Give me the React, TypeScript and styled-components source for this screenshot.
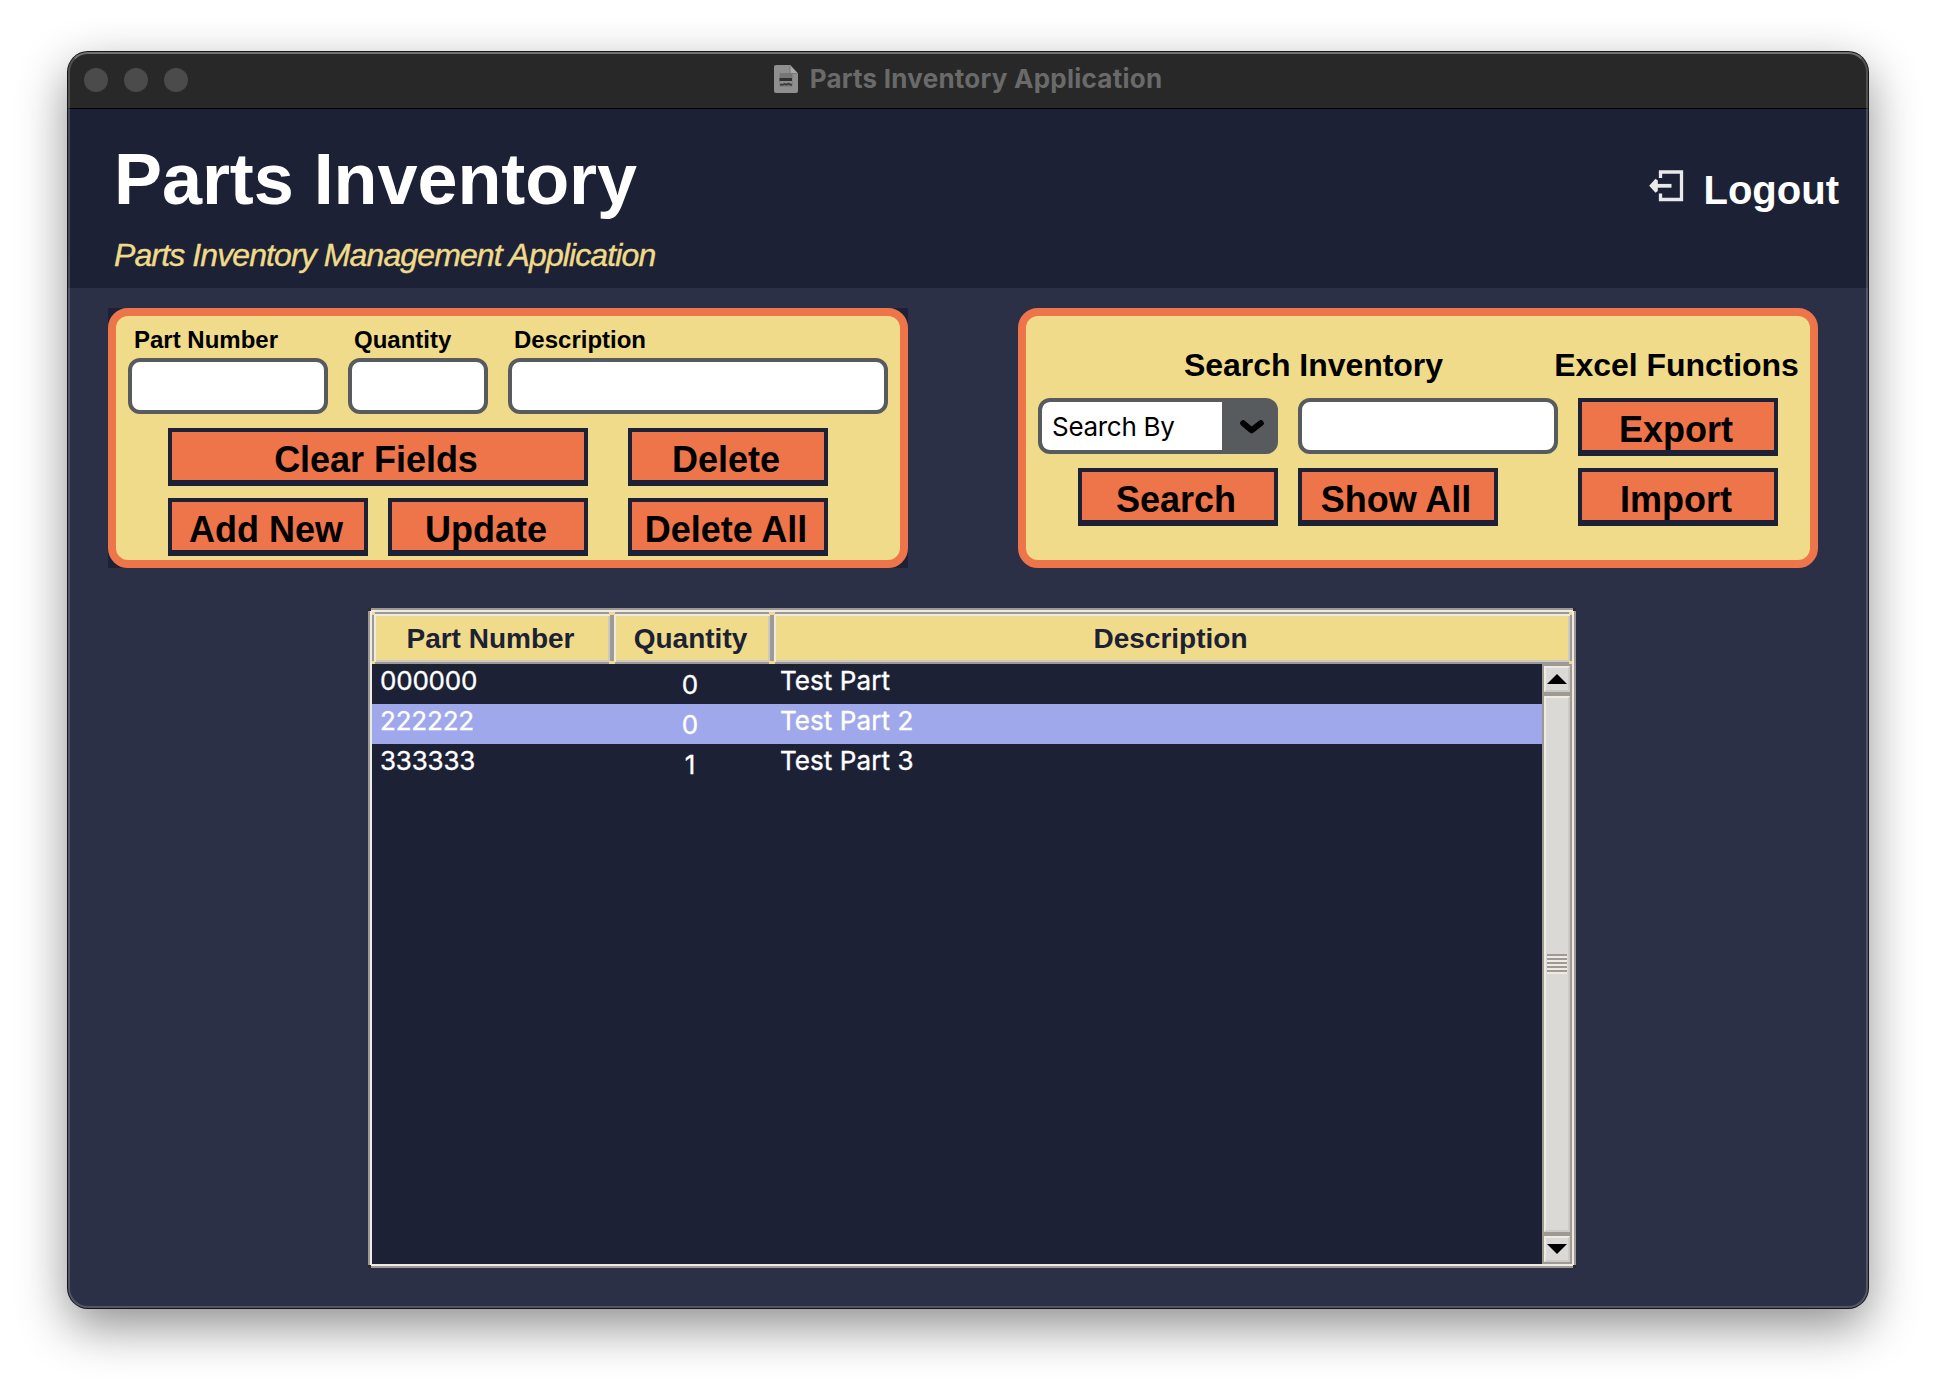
import React from "react";
import styled, { createGlobalStyle, css } from "styled-components";

const navy = "#1c2135";
const slate = "#2b3046";
const khaki = "#efdb89";
const orange = "#ee744a";
const steel = "#575b5e";
const bevelDark = "#9e9a91";
const bevelMid = "#cbcac6";
const bevelLight = "#eeebe7";
const arial = `"Liberation Sans", Arial, sans-serif`;
const system = `Inter, "Liberation Sans", sans-serif`;

const GlobalStyle = createGlobalStyle`
  *, *::before, *::after { box-sizing: border-box; }
  body { margin: 0; background: #fff; overflow: hidden; }
`;

const Desktop = styled.div`
  width: 1936px;
  height: 1392px;
  padding: 52px 68px 84px;
`;

const Window = styled.main`
  position: relative;
  display: flex;
  flex-direction: column;
  height: 1256px;
  border-radius: 20px;
  background: ${slate};
  box-shadow: 0 0 0 1px #151515, 0 18px 50px rgba(0, 0, 0, 0.45);
  &::after {
    content: "";
    position: absolute;
    inset: 0;
    border: 2px solid rgba(255, 255, 255, 0.19);
    border-top-color: rgba(255, 255, 255, 0.34);
    border-radius: inherit;
    pointer-events: none;
  }
`;

const TitleBar = styled.div`
  display: grid;
  grid-template-columns: 1fr auto 1fr;
  align-items: center;
  height: 57px;
  flex: none;
  padding: 0 16px;
  border-bottom: 1px solid #000;
  border-radius: 20px 20px 0 0;
  background: #282828;
`;

const Lights = styled.div`
  display: flex;
  gap: 16px;
`;

const Light = styled.i`
  width: 24px;
  height: 24px;
  border-radius: 50%;
  background: #4b4b4b;
`;

const WindowTitle = styled.div`
  display: flex;
  align-items: center;
  gap: 12px;
  padding-bottom: 3px;
  font: 700 26px/40px ${system};
  letter-spacing: 0.24px;
  color: #6a6a6a;
`;

const Header = styled.header`
  display: flex;
  justify-content: space-between;
  height: 179px;
  flex: none;
  padding: 30px 29px 0 46px;
  background: ${navy};
`;

const Title = styled.h1`
  margin: 0 0 16px;
  font: 700 72px/80px ${arial};
  letter-spacing: -0.08px;
  color: #fff;
`;

const Subtitle = styled.p`
  margin: 0;
  font: italic 400 32px/40px ${arial};
  letter-spacing: -0.89px;
  -webkit-text-stroke: 0.4px ${khaki};
  color: ${khaki};
`;

const Logout = styled.button`
  display: flex;
  align-items: flex-start;
  align-self: flex-start;
  gap: 20px;
  margin-top: 29px;
  padding: 0;
  border: 0;
  background: none;
  font: 700 40px/44px ${arial};
  color: #fff;
  svg { margin-top: 2px; }
`;

const Panels = styled.div`
  display: flex;
  justify-content: space-between;
  padding: 20px 50px 0 40px;
`;

const PanelBack = styled.div<{ $dark?: boolean }>`
  width: 800px;
  height: 260px;
  background: ${(p) => (p.$dark ? navy : "transparent")};
`;

const Panel = styled.section<{ $top: number; $row?: boolean }>`
  display: flex;
  flex-direction: ${(p) => (p.$row ? "row" : "column")};
  gap: ${(p) => (p.$row ? 20 : 14)}px;
  height: 100%;
  padding: ${(p) => p.$top}px 12px 0;
  border: 8px solid ${orange};
  border-radius: 20px;
  background: ${khaki};
`;

const Row = styled.div<{ $gap?: number; $indent?: number }>`
  display: flex;
  gap: ${(p) => p.$gap ?? 20}px;
  padding-left: ${(p) => p.$indent ?? 0}px;
`;

const Field = styled.label`
  display: flex;
  flex-direction: column;
  gap: 4px;
  font: 700 24px/28px ${arial};
  color: #000;
  span { padding-left: 6px; }
`;

const entryBox = css`
  height: 56px;
  border: 4px solid ${steel};
  border-radius: 12px;
  background: #fff;
`;

const Entry = styled.input<{ $width: number }>`
  ${entryBox}
  width: ${(p) => p.$width}px;
  padding: 0 10px;
  outline: 0;
  font: 400 26px ${system};
`;

const ButtonGrid = styled.div<{ $columns: number }>`
  display: grid;
  grid-template-columns: repeat(${(p) => p.$columns}, 200px);
  gap: 12px 20px;
`;

const Button = styled.button<{ $wide?: boolean }>`
  grid-column: ${(p) => (p.$wide ? "span 2" : "auto")};
  height: 58px;
  padding: 7px 4px 0 0;
  border: solid ${navy};
  border-width: 4px 4px 6px;
  background: ${orange};
  font: 700 36px/41px ${arial};
  letter-spacing: -0.03px;
  white-space: nowrap;
  color: #000;
`;

const SearchGroup = styled.div`
  display: flex;
  flex-direction: column;
  gap: 14px;
  width: 520px;
`;

const ExcelGroup = styled.div`
  display: flex;
  flex-direction: column;
  align-items: center;
  width: 200px;
`;

const GroupTitle = styled.h2<{ $indent?: number; $outdent?: number; $gap: number }>`
  margin: 0 0 ${(p) => p.$gap}px;
  padding: 0 ${(p) => p.$outdent ?? 0}px 0 ${(p) => p.$indent ?? 0}px;
  font: 700 32px/40px ${arial};
  letter-spacing: -0.05px;
  text-align: center;
  white-space: nowrap;
  color: #000;
`;

const Combo = styled.div`
  ${entryBox}
  display: flex;
  width: 240px;
  overflow: hidden;
  background: ${steel};
`;

const ComboText = styled.span`
  width: 180px;
  height: 48px;
  padding-left: 10px;
  border-radius: 7px 0 0 7px;
  background: #fff;
  font: 400 26px/50px ${system};
  letter-spacing: -0.3px;
  color: #000;
`;

const ComboArrow = styled.span`
  display: flex;
  flex: 1;
  padding: 18px 0 0 18px;
`;

const Table = styled.section`
  position: relative;
  width: 1208px;
  height: 660px;
  margin: 40px 0 0 300px;
  padding: 2px;
  border: 2px solid ${bevelDark};
  background: ${navy};
  box-shadow: inset 0 0 0 2px ${bevelLight};
  &::before {
    content: "";
    position: absolute;
    inset: -2px;
    background:
      linear-gradient(#2d2b2a, #2d2b2a) 0 0 / 3px 3px no-repeat,
      linear-gradient(#2d2b2a, #2d2b2a) 100% 0 / 3px 3px no-repeat,
      linear-gradient(#2d2b2a, #2d2b2a) 0 100% / 3px 3px no-repeat,
      linear-gradient(#2d2b2a, #2d2b2a) 100% 100% / 3px 3px no-repeat;
    pointer-events: none;
  }
`;

const columns = "240px 160px 1fr";

const HeadRow = styled.div`
  display: grid;
  grid-template-columns: ${columns};
`;

const fill = (c: string) => `linear-gradient(${c}, ${c})`;

const HeadCell = styled.div`
  height: 52px;
  background:
    ${fill(khaki)} 0 0 / 3px 3px no-repeat,
    ${fill(khaki)} 100% 0 / 3px 3px no-repeat,
    ${fill(khaki)} 0 100% / 3px 3px no-repeat,
    ${fill(khaki)} 100% 100% / 3px 3px no-repeat,
    ${fill(bevelDark)} 0 0 / 100% 2px no-repeat,
    ${fill(bevelDark)} 0 100% / 100% 2px no-repeat,
    ${fill(bevelDark)} 0 0 / 2px 100% no-repeat,
    ${fill(bevelDark)} 100% 0 / 2px 100% no-repeat,
    ${fill(bevelLight)} 2px 2px / 100% 2px no-repeat,
    ${fill(bevelLight)} 2px 2px / 2px 100% no-repeat,
    ${fill(bevelMid)} 0 calc(100% - 2px) / 100% 2px no-repeat,
    ${fill(bevelMid)} calc(100% - 2px) 0 / 2px 100% no-repeat,
    ${khaki};
  padding: 5px 3px 0 0;
  font: 700 28px/44px ${arial};
  text-align: center;
  color: ${navy};
`;

const TableBody = styled.div`
  display: flex;
  height: 600px;
`;

const Rows = styled.div`
  flex: 1;
`;

const Record = styled.div<{ $selected?: boolean }>`
  display: grid;
  grid-template-columns: ${columns};
  height: 40px;
  background: ${(p) => (p.$selected ? "#a0a8ec" : navy)};
  color: #fff;
`;

const Cell = styled.span<{ $centered?: boolean; $tight?: boolean }>`
  height: 40px;
  padding: ${(p) => (p.$centered ? "0 4px 0 0" : "0 8px")};
  font: 400 26px/${(p) => (p.$centered ? 42 : 33)}px ${system};
  letter-spacing: ${(p) => (p.$tight ? -0.2 : 0.08)}px;
  -webkit-text-stroke: 0.35px #fff;
  text-align: ${(p) => (p.$centered ? "center" : "left")};
`;

const Scrollbar = styled.div`
  display: flex;
  flex-direction: column;
  gap: 4px;
  width: 30px;
  padding: 2px;
  background: ${bevelDark};
`;

const raised = css`
  display: flex;
  align-items: center;
  justify-content: center;
  width: 26px;
  border: 2px solid;
  border-color: ${bevelLight} ${bevelMid} ${bevelMid} ${bevelLight};
  background: #dad9d5;
`;

const ScrollStep = styled.div`
  ${raised}
  height: 26px;
`;

const Thumb = styled.div`
  ${raised}
  flex: 1;
`;

const Grip = styled.div`
  width: 20px;
  height: 20px;
  background: repeating-linear-gradient(${bevelDark} 0 2px, ${bevelLight} 2px 4px);
`;

const DocumentIcon = () => (
  <svg width="24" height="28" viewBox="0 0 24 28">
    <path d="M2 0h14l8 8.500V26a2 2 0 0 1-2 2H2a2 2 0 0 1-2-2V2a2 2 0 0 1 2-2z" fill="#8f8f8f" />
    <path d="M16 0v7a1.500 1.500 0 0 0 1.500 1.500H24z" fill="#a9a9a9" />
    <path d="M16 1v6.500a1 1 0 0 0 1 1H23" fill="none" stroke="#777" strokeWidth="1" />
    <rect x="5.500" y="8" width="13" height="13.500" rx="1" fill="#767676" />
    <rect x="5.500" y="13" width="12.500" height="3" fill="#303030" />
    <path d="M6 19.800h3l1.500-1 2 1 2-1.500 1.500 1.500h2" fill="none" stroke="#3a3a3a" strokeWidth="1.600" />
    <path d="M6 17h12" stroke="#a2a2a2" strokeWidth="1" />
  </svg>
);

const LogoutIcon = () => (
  <svg width="35" height="32" viewBox="0 0 35 32" fill="none" stroke="#e9e9ec">
    <path d="M11.500 8V2H32.500V29.500H11.500V23.500" strokeWidth="3.300" />
    <path d="M5 15.800H22.500" strokeWidth="3.800" />
    <path d="M0.200 15.800L6.500 8.800L8.800 10.500V21L6.500 22.800Z" fill="#e9e9ec" stroke="none" />
  </svg>
);

const Chevron = () => (
  <svg width="24" height="14" viewBox="0 0 24 14">
    <path d="M3.200 3.200L11.500 10.300L20.800 3.200" fill="none" stroke="#000" strokeWidth="6" strokeLinecap="round" strokeLinejoin="round" />
  </svg>
);

const Triangle = ({ down }: { down?: boolean }) => (
  <svg width="20" height="10" viewBox="0 0 20 10">
    <path d={down ? "M0 0H20L10 10Z" : "M0 10H20L10 0Z"} fill="#000" />
  </svg>
);

const parts = [
  { number: "000000", quantity: 0, description: "Test Part" },
  { number: "222222", quantity: 0, description: "Test Part 2", selected: true },
  { number: "333333", quantity: 1, description: "Test Part 3" },
];

export default function App() {
  return (
    <Desktop>
      <GlobalStyle />
      <Window>
        <TitleBar>
          <Lights>
            <Light />
            <Light />
            <Light />
          </Lights>
          <WindowTitle>
            <DocumentIcon />
            Parts Inventory Application
          </WindowTitle>
        </TitleBar>

        <Header>
          <div>
            <Title>Parts Inventory</Title>
            <Subtitle>Parts Inventory Management Application</Subtitle>
          </div>
          <Logout>
            <LogoutIcon />
            Logout
          </Logout>
        </Header>

        <Panels>
          <PanelBack $dark>
            <Panel $top={10}>
              <Row>
                <Field>
                  <span>Part Number</span>
                  <Entry $width={200} />
                </Field>
                <Field>
                  <span>Quantity</span>
                  <Entry $width={140} />
                </Field>
                <Field>
                  <span>Description</span>
                  <Entry $width={380} />
                </Field>
              </Row>
              <Row $gap={40} $indent={40}>
                <ButtonGrid $columns={2}>
                  <Button $wide>Clear Fields</Button>
                  <Button>Add New</Button>
                  <Button>Update</Button>
                </ButtonGrid>
                <ButtonGrid $columns={1}>
                  <Button>Delete</Button>
                  <Button>Delete All</Button>
                </ButtonGrid>
              </Row>
            </Panel>
          </PanelBack>

          <PanelBack>
            <Panel $top={29} $row>
              <SearchGroup>
                <GroupTitle $indent={31} $gap={-1}>Search Inventory</GroupTitle>
                <Row>
                  <Combo>
                    <ComboText>Search By</ComboText>
                    <ComboArrow>
                      <Chevron />
                    </ComboArrow>
                  </Combo>
                  <Entry $width={260} />
                </Row>
                <Row $indent={40}>
                  <ButtonGrid $columns={2}>
                    <Button>Search</Button>
                    <Button>Show All</Button>
                  </ButtonGrid>
                </Row>
              </SearchGroup>
              <ExcelGroup>
                <GroupTitle $outdent={3} $gap={13}>Excel Functions</GroupTitle>
                <ButtonGrid $columns={1}>
                  <Button>Export</Button>
                  <Button>Import</Button>
                </ButtonGrid>
              </ExcelGroup>
            </Panel>
          </PanelBack>
        </Panels>

        <Table>
          <HeadRow>
            <HeadCell>Part Number</HeadCell>
            <HeadCell>Quantity</HeadCell>
            <HeadCell>Description</HeadCell>
          </HeadRow>
          <TableBody>
            <Rows>
              {parts.map((p) => (
                <Record key={p.number} $selected={p.selected}>
                  <Cell $tight>{p.number}</Cell>
                  <Cell $centered>{p.quantity}</Cell>
                  <Cell>{p.description}</Cell>
                </Record>
              ))}
            </Rows>
            <Scrollbar>
              <ScrollStep>
                <Triangle />
              </ScrollStep>
              <Thumb>
                <Grip />
              </Thumb>
              <ScrollStep>
                <Triangle down />
              </ScrollStep>
            </Scrollbar>
          </TableBody>
        </Table>
      </Window>
    </Desktop>
  );
}
